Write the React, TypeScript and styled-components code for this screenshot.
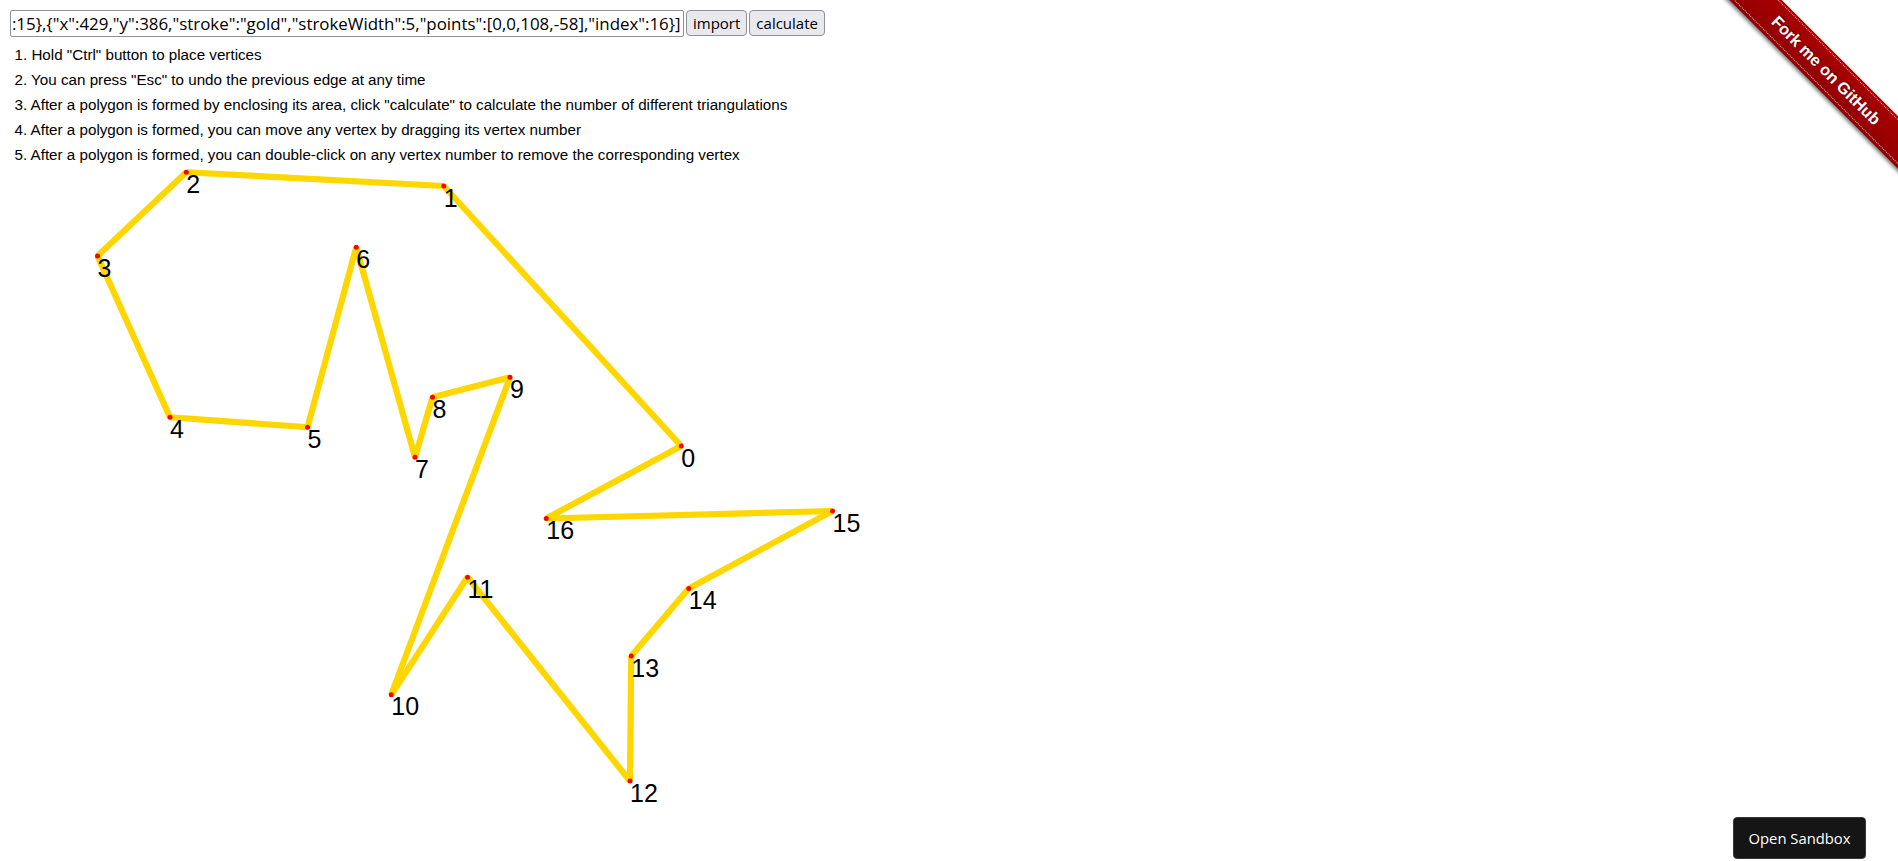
import React, { useLayoutEffect, useRef } from "react";
import styled, { createGlobalStyle } from "styled-components";

const GlobalStyle = createGlobalStyle`
  html, body {
    padding: 0;
    background: #ffffff;
  }
  body {
    margin: 10px;
    overflow: hidden;
    font-family: "Liberation Sans", Arial, sans-serif;
  }
`;

const VERTICES: [number, number][] = [
  [537, 328],
  [347, 120],
  [141, 109],
  [70, 176],
  [128, 305],
  [238, 313],
  [277, 169],
  [324, 337],
  [338, 289],
  [400, 273],
  [305, 527],
  [366, 433],
  [496, 596],
  [497, 496],
  [543, 442],
  [658, 380],
  [429, 386],
];

const SHAPES = VERTICES.map(([x, y], i) => {
  const [nx, ny] = VERTICES[(i + 1) % VERTICES.length];
  return {
    x,
    y,
    stroke: "gold",
    strokeWidth: 5,
    points: [0, 0, nx - x, ny - y],
    index: i,
  };
});

const INSTRUCTIONS = [
  '1. Hold "Ctrl" button to place vertices',
  '2. You can press "Esc" to undo the previous edge at any time',
  '3. After a polygon is formed by enclosing its area, click "calculate" to calculate the number of different triangulations',
  "4. After a polygon is formed, you can move any vertex by dragging its vertex number",
  "5. After a polygon is formed, you can double-click on any vertex number to remove the corresponding vertex",
];

const Page = styled.div`
  display: flex;
  flex-direction: column;
`;

const Toolbar = styled.div`
  display: flex;
  align-items: center;
  gap: 2px;
  height: 26px;
`;

const JsonInput = styled.input`
  width: 674px;
  height: 27px;
  box-sizing: border-box;
  border: 1px solid #8f8f9d;
  border-radius: 2px;
  padding: 0 2px;
  margin: 0;
  font: 16.9px "Open Sans", "Noto Sans", sans-serif;
  color: #000000;
  background: #ffffff;
  outline: none;
`;

const ToolButton = styled.button`
  height: 26px;
  box-sizing: border-box;
  margin: 0;
  padding: 0 6px;
  border: 1px solid #8f8f9d;
  border-radius: 4px;
  background: #e9e9ed;
  color: #000000;
  font: 15px "Open Sans", "Noto Sans", sans-serif;
  line-height: 24px;
  cursor: pointer;
`;

const Stage = styled.div`
  display: grid;

  & > * {
    grid-area: 1 / 1;
  }
`;

const Instructions = styled.div`
  align-self: start;
  justify-self: start;
  padding: 7.4px 0 0 4.5px;
  font: 15.2px/24.8px "Liberation Sans", Arial, sans-serif;
  color: #000000;
  z-index: 1;
  pointer-events: none;
`;

const InstructionLine = styled.div`
  white-space: nowrap;
`;

const Canvas = styled.svg`
  display: block;
`;

const VertexLabel = styled.text`
  font-family: "Liberation Sans", Arial, sans-serif;
  font-size: 20px;
  fill: #000000;
`;

const RibbonCorner = styled.a`
  position: absolute;
  top: 0;
  right: 0;
  width: 197px;
  height: 197px;
  overflow: hidden;
  z-index: 10;
  font-size: 16.25px;
  text-decoration: none;
`;

const RibbonBand = styled.span`
  position: absolute;
  display: block;
  top: 3.23em;
  right: -3.23em;
  width: 15.38em;
  height: 1.54em;
  padding: 0.38em 0;
  box-sizing: content-box;
  transform: rotate(45deg);
  background-color: #aa0000;
  background-image: linear-gradient(to bottom, rgba(0, 0, 0, 0), rgba(0, 0, 0, 0.15));
  box-shadow: 0 0.15em 0.23em 0 rgba(0, 0, 0, 0.5);
`;

const RibbonText = styled.span`
  display: block;
  margin: -0.23em 0;
  padding: 0.15em 0;
  border-width: 0.08em 0;
  border-style: dotted;
  border-color: rgba(255, 255, 255, 0.7);
  color: #ffffff;
  font: 700 1em "Liberation Sans", Arial, sans-serif;
  line-height: 1.54em;
  text-align: center;
  text-shadow: 0 -0.08em rgba(0, 0, 0, 0.5);
  white-space: nowrap;
`;

const SandboxButton = styled.a`
  position: fixed;
  right: 32px;
  bottom: 2px;
  width: 133px;
  height: 42px;
  box-sizing: border-box;
  display: flex;
  align-items: center;
  justify-content: center;
  background: #151515;
  border: 1px solid #383838;
  border-radius: 4px;
  color: #ffffff;
  font: 14.8px "Open Sans", Roboto, sans-serif;
  text-decoration: none;
  z-index: 10;
`;

export default function App() {
  const inputRef = useRef<HTMLInputElement>(null);
  const value = JSON.stringify(SHAPES);

  useLayoutEffect(() => {
    const el = inputRef.current;
    if (el) el.scrollLeft = el.scrollWidth;
  }, []);

  return (
    <>
      <GlobalStyle />
      <Page>
        <Toolbar>
          <JsonInput ref={inputRef} defaultValue={value} spellCheck={false} />
          <ToolButton type="button">import</ToolButton>
          <ToolButton type="button">calculate</ToolButton>
        </Toolbar>
        <Stage>
          <Canvas width={1878} height={825}>
            <g transform="scale(1.25)">
              {SHAPES.map((s) => (
                <line
                  key={`l${s.index}`}
                  x1={s.x}
                  y1={s.y}
                  x2={s.x + s.points[2]}
                  y2={s.y + s.points[3]}
                  stroke="#FFD700"
                  strokeWidth={5}
                  strokeLinecap="butt"
                />
              ))}
              {SHAPES.map((s) => (
                <circle key={`c${s.index}`} cx={s.x} cy={s.y} r={2} fill="#ff0000" />
              ))}
              {SHAPES.map((s) => (
                <VertexLabel key={`t${s.index}`} x={s.x} y={s.y + 16.4}>
                  {s.index}
                </VertexLabel>
              ))}
            </g>
          </Canvas>
          <Instructions>
            {INSTRUCTIONS.map((t) => (
              <InstructionLine key={t}>{t}</InstructionLine>
            ))}
          </Instructions>
        </Stage>
      </Page>
      <RibbonCorner href="#" title="Fork me on GitHub">
        <RibbonBand>
          <RibbonText>Fork me on GitHub</RibbonText>
        </RibbonBand>
      </RibbonCorner>
      <SandboxButton href="#">Open Sandbox</SandboxButton>
    </>
  );
}
